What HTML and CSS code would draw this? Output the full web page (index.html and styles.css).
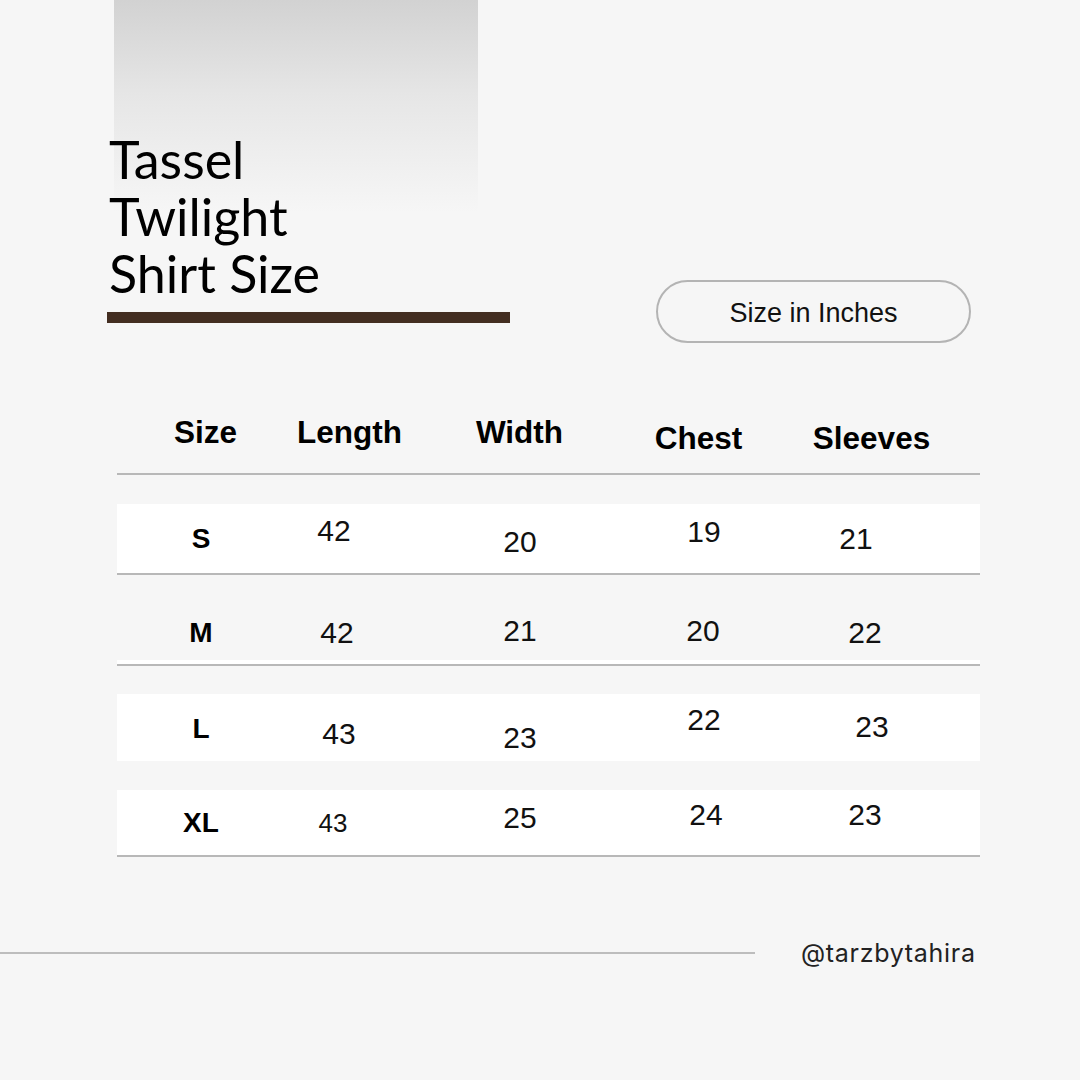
FILE: index.html
```html
<!DOCTYPE html>
<html lang="en">
<head>
<meta charset="utf-8">
<title>Tassel Twilight Shirt Size</title>
<link rel="stylesheet" href="styles.css">
</head>
<body>
<div class="page">
  <section class="hero">
    <div class="title-block">
      <h1 class="title">Tassel<br>Twilight<br>Shirt Size</h1>
      <div class="title-bar"></div>
    </div>
    <div class="unit-pill">Size in Inches</div>
  </section>

  <section class="size-table">
    <div class="table-head">
      <div class="th">Size</div>
      <div class="th">Length</div>
      <div class="th">Width</div>
      <div class="th th-low">Chest</div>
      <div class="th th-low">Sleeves</div>
    </div>

    <div class="row row-s">
      <div class="cell label">S</div>
      <div class="cell">42</div>
      <div class="cell">20</div>
      <div class="cell">19</div>
      <div class="cell">21</div>
    </div>

    <div class="row row-m">
      <div class="cell label">M</div>
      <div class="cell">42</div>
      <div class="cell">21</div>
      <div class="cell">20</div>
      <div class="cell">22</div>
    </div>

    <div class="row row-l">
      <div class="cell label">L</div>
      <div class="cell">43</div>
      <div class="cell">23</div>
      <div class="cell">22</div>
      <div class="cell">23</div>
    </div>

    <div class="row row-xl">
      <div class="cell label">XL</div>
      <div class="cell small">43</div>
      <div class="cell">25</div>
      <div class="cell">24</div>
      <div class="cell">23</div>
    </div>
  </section>

  <footer class="footer">
    <div class="footer-rule"></div>
    <span class="handle">@tarzbytahira</span>
  </footer>
</div>
</body>
</html>
```

FILE: styles.css
```css
html, body {
  margin: 0;
  padding: 0;
}

body {
  background: #f6f6f6;
  font-family: "Liberation Sans", Arial, sans-serif;
  color: #111;
}

.page {
  width: 1080px;
  height: 1080px;
  overflow: hidden;
}

/* ---------- hero ---------- */
.hero {
  display: flex;
  align-items: flex-end;
  justify-content: space-between;
  padding-left: 107px;
  padding-right: 109px;
}

.title-block {
  width: 403px;
  padding-bottom: 20px;
  background-image: linear-gradient(#d2d2d2 0%, #e6e6e6 45%, #f6f6f6 100%);
  background-size: 364px 212px;
  background-position: 7px 0;
  background-repeat: no-repeat;
}

.title {
  margin: 0;
  padding-top: 131px;
  padding-left: 2px;
  font-family: "Lato", "Noto Sans", sans-serif;
  font-weight: 400;
  font-size: 52px;
  line-height: 57px;
  color: #000;
}

.title-bar {
  margin-top: 10px;
  height: 11px;
  background: #432e21;
}

.unit-pill {
  box-sizing: border-box;
  width: 315px;
  height: 63px;
  padding-top: 3px;
  border: 2px solid #b4b4b4;
  border-radius: 32px;
  display: flex;
  align-items: center;
  justify-content: center;
  font-size: 27px;
  color: #111;
}

/* ---------- table ---------- */
.size-table {
  margin-top: 71px;
  margin-left: 117px;
  width: 863px;
}

.table-head {
  display: grid;
  grid-template-columns: 177px 111px 229px 129px 1fr;
  justify-items: center;
  align-items: start;
  height: 59px;
  border-bottom: 2px solid #b8b8b8;
}

.th {
  font-weight: 700;
  font-size: 31.5px;
  line-height: 36px;
  color: #000;
}

.th-low {
  padding-top: 6px;
}

.row {
  display: grid;
  grid-template-columns: 168px 102px 266px 102px 218px 1fr;
  justify-items: center;
  align-items: start;
}

.cell {
  font-size: 30px;
  line-height: 30px;
  color: #111;
}

.cell.label {
  font-weight: 700;
  font-size: 28px;
  color: #000;
}

.cell.small {
  font-size: 26px;
}

.row-s {
  margin-top: 29px;
  height: 69px;
  background: #fff;
  border-bottom: 2px solid #b8b8b8;
}
.row-s .cell:nth-child(1) { padding-top: 20px; }
.row-s .cell:nth-child(2) { padding-top: 12px; margin-left: -4px; }
.row-s .cell:nth-child(3) { padding-top: 23px; }
.row-s .cell:nth-child(4) { padding-top: 13px; }
.row-s .cell:nth-child(5) { padding-top: 20px; margin-left: -16px; }

.row-m {
  margin-top: 20px;
  height: 69px;
  box-shadow: inset 0 -4px 0 #fff;
  border-bottom: 2px solid #b8b8b8;
}
.row-m .cell:nth-child(1) { padding-top: 23px; }
.row-m .cell:nth-child(2) { padding-top: 23px; margin-left: 2px; }
.row-m .cell:nth-child(3) { padding-top: 21px; }
.row-m .cell:nth-child(4) { padding-top: 21px; margin-left: -2px; }
.row-m .cell:nth-child(5) { padding-top: 23px; margin-left: 2px; }

.row-l {
  margin-top: 28px;
  height: 67px;
  background: #fff;
}
.row-l .cell:nth-child(1) { padding-top: 20px; }
.row-l .cell:nth-child(2) { padding-top: 25px; margin-left: 6px; }
.row-l .cell:nth-child(3) { padding-top: 29px; }
.row-l .cell:nth-child(4) { padding-top: 11px; }
.row-l .cell:nth-child(5) { padding-top: 18px; margin-left: 16px; }

.row-xl {
  margin-top: 29px;
  height: 65px;
  background: #fff;
  border-bottom: 2px solid #b8b8b8;
}
.row-xl .cell:nth-child(1) { padding-top: 18px; }
.row-xl .cell:nth-child(2) { padding-top: 18px; margin-left: -6px; }
.row-xl .cell:nth-child(3) { padding-top: 13px; }
.row-xl .cell:nth-child(4) { padding-top: 10px; margin-left: 4px; }
.row-xl .cell:nth-child(5) { padding-top: 10px; margin-left: 2px; }

/* ---------- footer ---------- */
.footer {
  margin-top: 76px;
  height: 40px;
  display: flex;
  align-items: center;
}

.footer-rule {
  width: 755px;
  height: 2px;
  background: #bdbdbd;
}

.handle {
  margin-left: 46px;
  font-family: "Inter", "Roboto", sans-serif;
  font-size: 25px;
  letter-spacing: 0.7px;
  color: #222;
}
```
